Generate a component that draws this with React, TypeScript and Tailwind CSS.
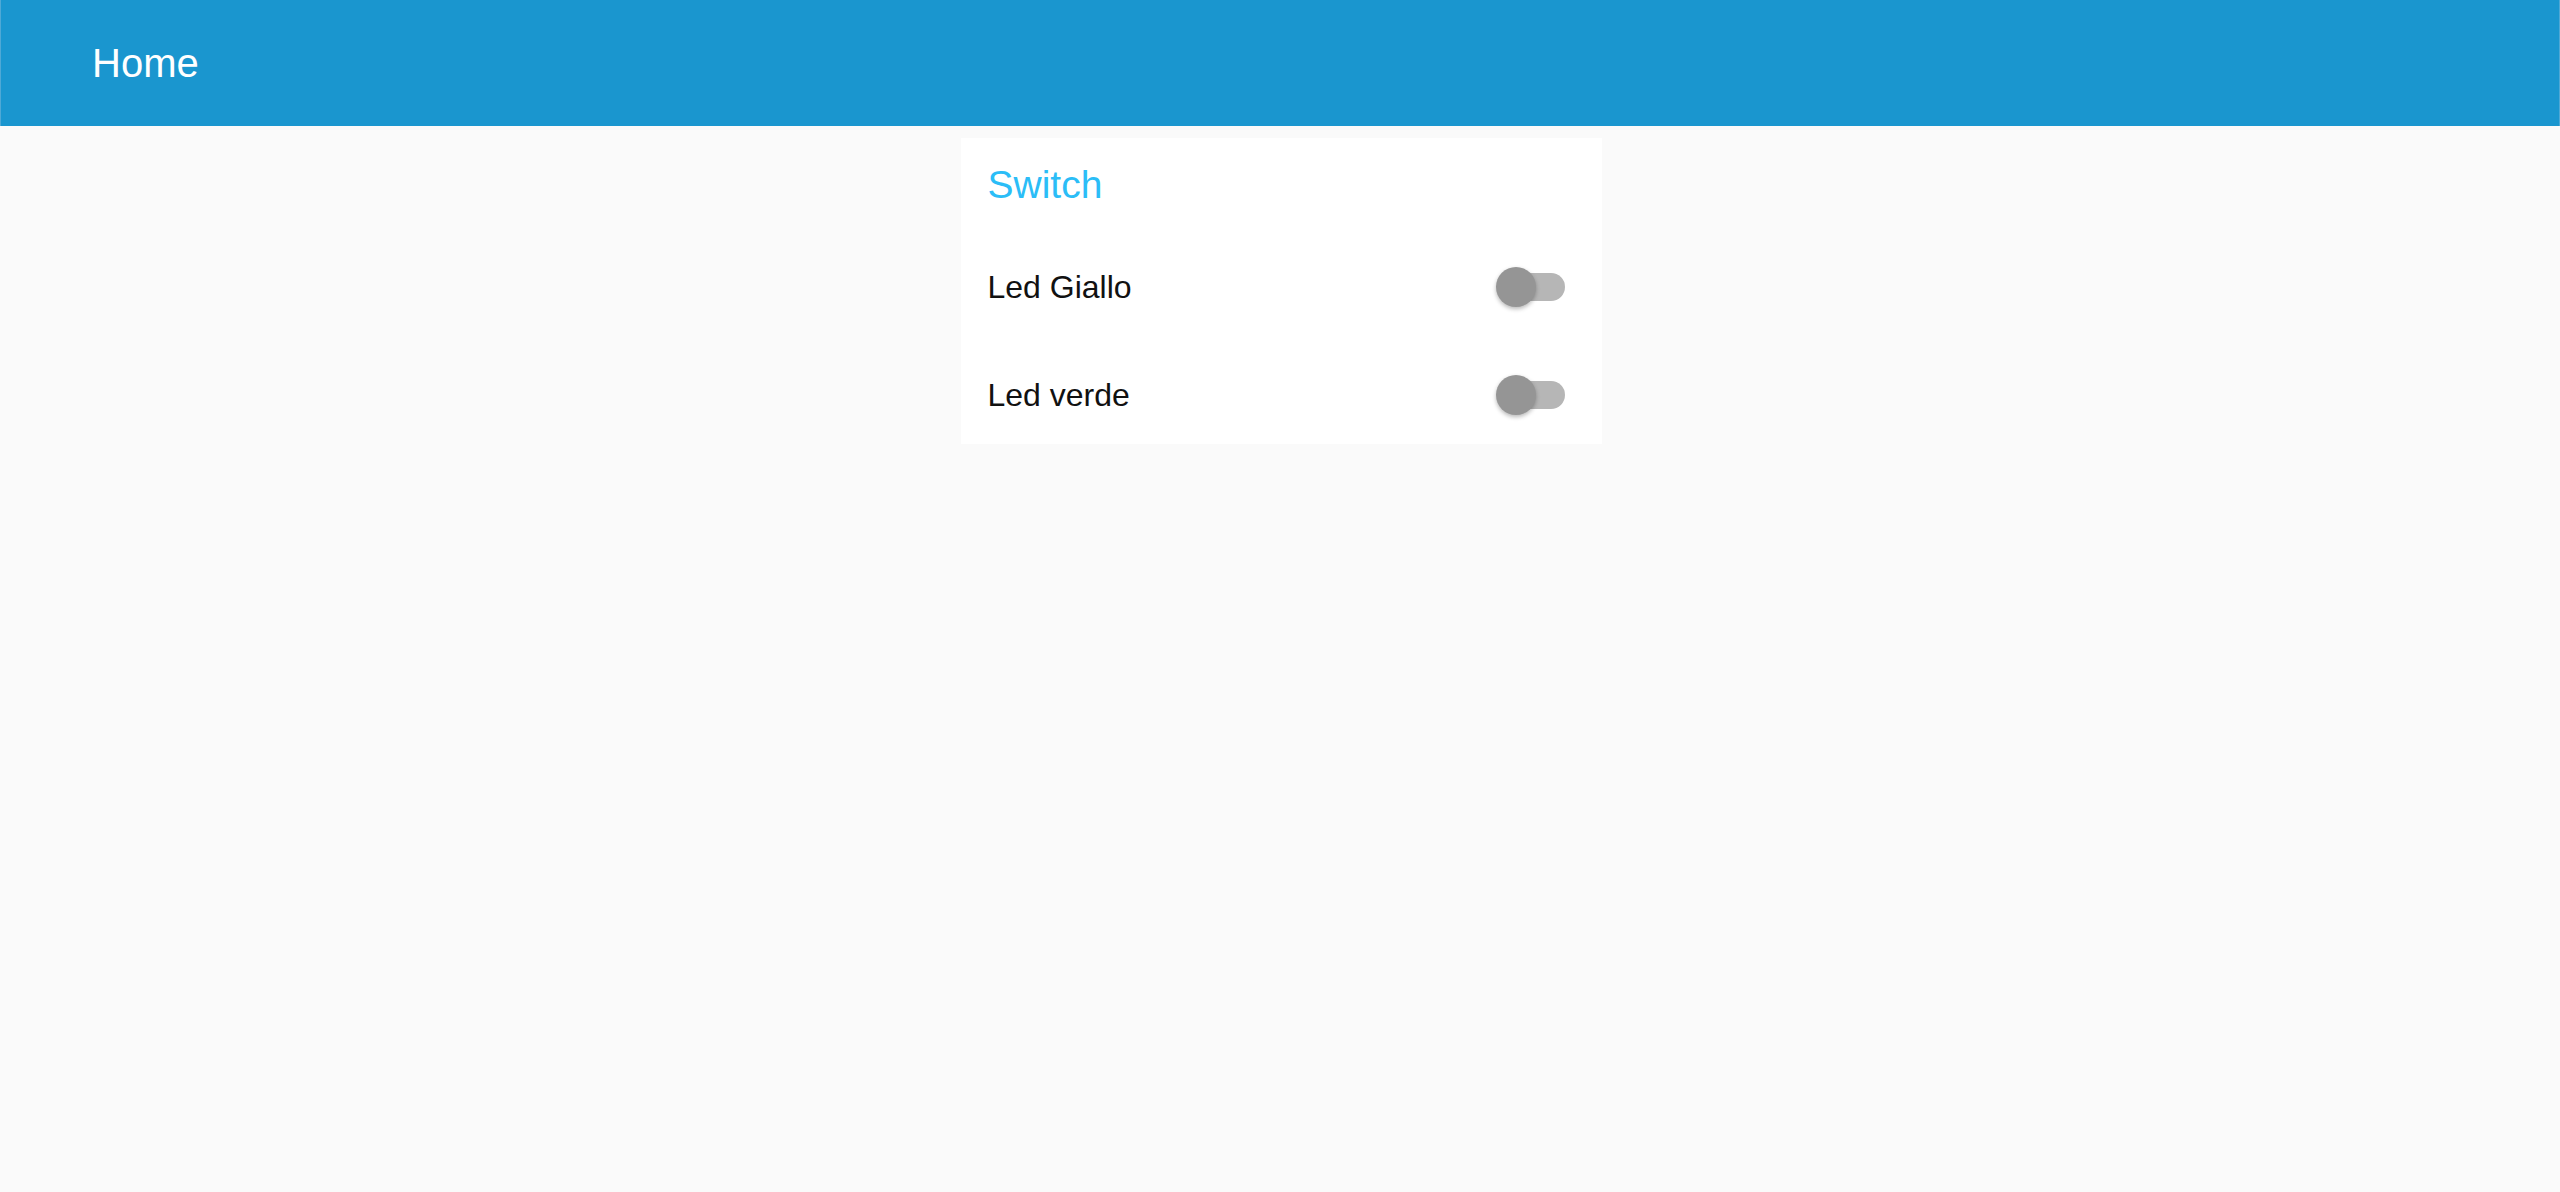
import React from "react";

function Toggle() {
  return (
    <div className="relative w-[69px] h-[40px] shrink-0">
      <div className="absolute right-0 top-[6px] w-[56px] h-[28px] rounded-full bg-[#b6b6b6]" />
      <div className="absolute left-0 top-0 w-[40px] h-[40px] rounded-full bg-[#959595] shadow-[0_2px_4px_rgba(0,0,0,0.28)]" />
    </div>
  );
}

function Row({ label }: { label: string }) {
  return (
    <div className="h-[98px] flex items-center justify-between pr-[37px]">
      <span className="text-[32px] leading-[36px] text-[#111111]">{label}</span>
      <Toggle />
    </div>
  );
}

export default function App() {
  return (
    <div
      className="min-h-screen w-full bg-[#fafafa]"
      style={{ fontFamily: '"Liberation Sans", Arial, sans-serif' }}
    >
      <header className="h-[126px] bg-[#1a96cf] border-x border-[#4fa9d6] flex items-center pl-[91px]">
        <span className="text-[40px] leading-[46px] text-white">Home</span>
      </header>
      <main className="flex justify-center pt-[12px] pl-[2px]">
        <section className="w-[641px] bg-white pl-[27px] pt-[24px] flex flex-col">
          <h1 className="text-[39px] leading-[45px] text-[#2bbdf7] font-normal">Switch</h1>
          <div className="flex flex-col gap-[10px] mt-[31px]">
            <Row label="Led Giallo" />
            <Row label="Led verde" />
          </div>
        </section>
      </main>
    </div>
  );
}
